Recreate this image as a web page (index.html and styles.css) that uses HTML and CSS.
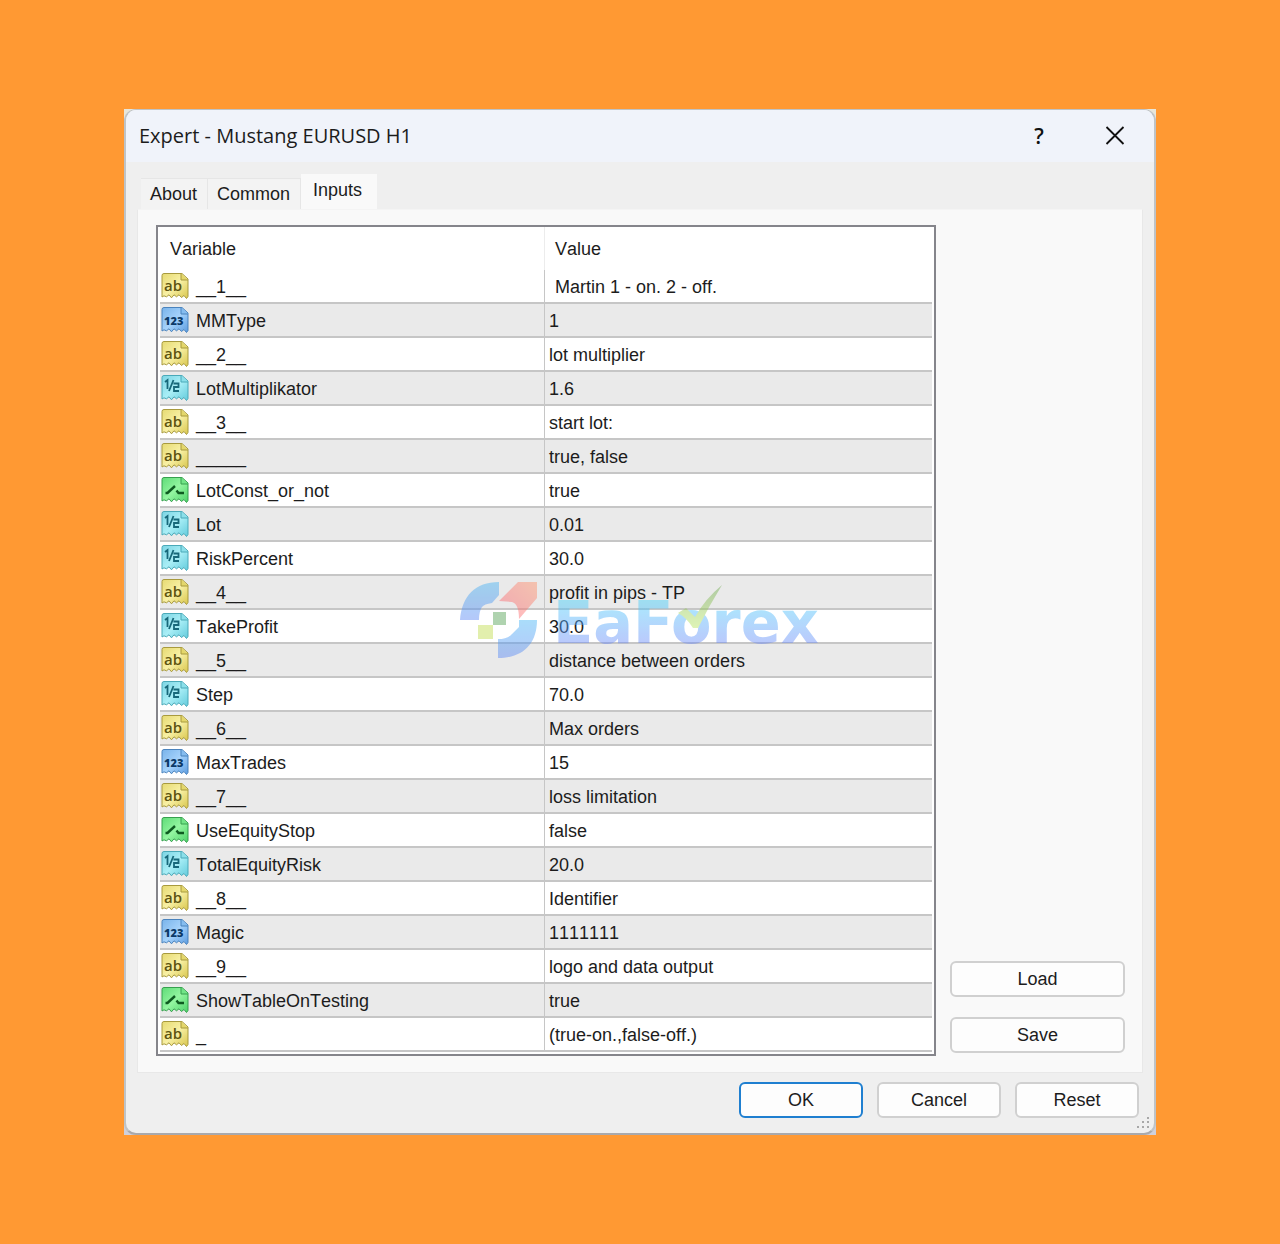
FILE: index.html
```html
<!DOCTYPE html>
<html lang="en">
<head>
<meta charset="utf-8">
<title>Expert - Mustang EURUSD H1</title>
<link rel="stylesheet" href="styles.css">
</head>
<body>
<svg class="defs" width="0" height="0" aria-hidden="true">
  <defs>
    <linearGradient id="gy" x1="0" y1="0" x2="1" y2="1"><stop offset="0" stop-color="#e6da72"/><stop offset=".5" stop-color="#f8f0a4"/><stop offset="1" stop-color="#d9c64c"/></linearGradient>
    <linearGradient id="gb" x1="0" y1="0" x2="1" y2="1"><stop offset="0" stop-color="#79b3ea"/><stop offset=".5" stop-color="#a5d2fb"/><stop offset="1" stop-color="#5b9be0"/></linearGradient>
    <linearGradient id="gc" x1="0" y1="0" x2="1" y2="1"><stop offset="0" stop-color="#7cd5e4"/><stop offset=".5" stop-color="#a9eef6"/><stop offset="1" stop-color="#62cbdc"/></linearGradient>
    <linearGradient id="gg" x1="0" y1="0" x2="1" y2="1"><stop offset="0" stop-color="#5fdc78"/><stop offset=".5" stop-color="#93f5a0"/><stop offset="1" stop-color="#4bd268"/></linearGradient>
    <path id="sheet" d="M3 1.5H21L27 7V24.5L25.5 26.5L23 23.5L20.5 25.5L18 22.8L15.5 24.8L13 22.8L10.5 25.8L8 22.8L5.5 24.8L3 23.8L1 25V3.5Q1 1.5 3 1.5Z"/>
    <path id="fold" d="M20 1.5V8H27"/>
    <symbol id="i-ab" viewBox="0 0 28 28"><use href="#sheet" fill="url(#gy)" stroke="#a89a3e"/><use href="#fold" fill="#e4d76a" stroke="#a89a3e"/><text x="3" y="19" class="glyph" font-size="15" fill="#5e5410">ab</text></symbol>
    <symbol id="i-int" viewBox="0 0 28 28"><use href="#sheet" fill="url(#gb)" stroke="#4a83bd"/><use href="#fold" fill="#85bdf0" stroke="#4a83bd"/><text x="3" y="19" class="glyph heavy" font-size="11" fill="#0c3a68">123</text></symbol>
    <symbol id="i-dbl" viewBox="0 0 28 28"><use href="#sheet" fill="url(#gc)" stroke="#4aa9b8"/><use href="#fold" fill="#8adfea" stroke="#4aa9b8"/><path d="M4 8L6.500 6V15M12.500 6L8 17M12.500 9.500H17.500V13H13V17H18" fill="none" stroke="#17687a" stroke-width="1.800"/></symbol>
    <symbol id="i-bool" viewBox="0 0 28 28"><use href="#sheet" fill="url(#gg)" stroke="#36a04e"/><use href="#fold" fill="#71e587" stroke="#36a04e"/><path d="M4.500 17H6.500L14 10M15.500 14.500L17.500 17H23" fill="none" stroke="#0e5a20" stroke-width="2.400"/></symbol>
  </defs>
</svg>

<main class="frame">
  <section class="dialog" aria-labelledby="dialog-title">
    <header class="titlebar">
      <h1 id="dialog-title">Expert - Mustang EURUSD H1</h1>
      <button class="sysbtn help" type="button" aria-label="Help">?</button>
      <button class="sysbtn" type="button" aria-label="Close"><svg width="20" height="20" viewBox="0 0 20 20"><path d="M1.500 1L18.500 18M18.500 1L1.500 18" stroke="#111" stroke-width="1.800" fill="none"/></svg></button>
    </header>

    <div class="tabs" role="tablist">
      <button class="tab" role="tab" type="button">About</button>
      <button class="tab" role="tab" type="button">Common</button>
      <button class="tab active" role="tab" type="button" aria-selected="true">Inputs</button>
    </div>

    <div class="panel">
      <div class="grid">
        <table>
          <thead><tr><th class="name">Variable</th><th>Value</th></tr></thead>
          <tbody>
            <tr><td><svg><use href="#i-ab"/></svg>__1__</td><td class="lead">Martin 1 - on. 2 - off.</td></tr>
            <tr><td><svg><use href="#i-int"/></svg>MMType</td><td>1</td></tr>
            <tr><td><svg><use href="#i-ab"/></svg>__2__</td><td>lot multiplier</td></tr>
            <tr><td><svg><use href="#i-dbl"/></svg>LotMultiplikator</td><td>1.6</td></tr>
            <tr><td><svg><use href="#i-ab"/></svg>__3__</td><td>start lot:</td></tr>
            <tr><td><svg><use href="#i-ab"/></svg>_____</td><td>true, false</td></tr>
            <tr><td><svg><use href="#i-bool"/></svg>LotConst_or_not</td><td>true</td></tr>
            <tr><td><svg><use href="#i-dbl"/></svg>Lot</td><td>0.01</td></tr>
            <tr><td><svg><use href="#i-dbl"/></svg>RiskPercent</td><td>30.0</td></tr>
            <tr><td><svg><use href="#i-ab"/></svg>__4__</td><td>profit in pips - TP</td></tr>
            <tr><td><svg><use href="#i-dbl"/></svg>TakeProfit</td><td>30.0</td></tr>
            <tr><td><svg><use href="#i-ab"/></svg>__5__</td><td>distance between orders</td></tr>
            <tr><td><svg><use href="#i-dbl"/></svg>Step</td><td>70.0</td></tr>
            <tr><td><svg><use href="#i-ab"/></svg>__6__</td><td>Max orders</td></tr>
            <tr><td><svg><use href="#i-int"/></svg>MaxTrades</td><td>15</td></tr>
            <tr><td><svg><use href="#i-ab"/></svg>__7__</td><td>loss limitation</td></tr>
            <tr><td><svg><use href="#i-bool"/></svg>UseEquityStop</td><td>false</td></tr>
            <tr><td><svg><use href="#i-dbl"/></svg>TotalEquityRisk</td><td>20.0</td></tr>
            <tr><td><svg><use href="#i-ab"/></svg>__8__</td><td>Identifier</td></tr>
            <tr><td><svg><use href="#i-int"/></svg>Magic</td><td>1111111</td></tr>
            <tr><td><svg><use href="#i-ab"/></svg>__9__</td><td>logo and data output</td></tr>
            <tr><td><svg><use href="#i-bool"/></svg>ShowTableOnTesting</td><td>true</td></tr>
            <tr><td><svg><use href="#i-ab"/></svg>_</td><td>(true-on.,false-off.)</td></tr>
          </tbody>
        </table>
      </div>
      <div class="side">
        <button class="btn" type="button">Load</button>
        <button class="btn" type="button">Save</button>
      </div>
    </div>

    <footer class="actions">
      <button class="btn primary" type="button">OK</button>
      <button class="btn" type="button">Cancel</button>
      <button class="btn" type="button">Reset</button>
    </footer>
    <svg class="grip" width="14" height="14" viewBox="0 0 14 14" aria-hidden="true"><path d="M10 1h2v2h-2zM10 5h2v2h-2zM10 10h2v2h-2zM5 5h2v2h-2zM5 10h2v2h-2zM0 10h2v2h-2z" fill="#a8a8a8"/></svg>
  </section>

  <svg class="watermark" width="370" height="84" viewBox="0 0 370 84" role="img" aria-label="EaForex">
    <defs>
      <linearGradient id="w1" x1="0" y1="0" x2="0" y2="1"><stop offset="0" stop-color="#44b4f4"/><stop offset="1" stop-color="#5a86f6"/></linearGradient>
      <linearGradient id="w2" x1="1" y1="0" x2="0" y2="1"><stop offset="0" stop-color="#ff9468"/><stop offset="1" stop-color="#fb5570"/></linearGradient>
      <linearGradient id="w3" gradientUnits="userSpaceOnUse" x1="0" y1="22" x2="0" y2="66"><stop offset="0" stop-color="#44d0fb"/><stop offset="1" stop-color="#6a86fa"/></linearGradient>
      <linearGradient id="w4" x1="0" y1="0" x2="0" y2="1"><stop offset="0" stop-color="#6ca850"/><stop offset="1" stop-color="#b6e65c"/></linearGradient>
    </defs>
    <g opacity=".45">
      <path d="M0 41C2 17 15 3 39 3V16L32 24Q24 25 22 28Q19 32 19 41Z" fill="url(#w1)"/>
      <path d="M39 22L58 3H77V19L59 40Q59 25 52 23Z" fill="url(#w2)"/>
      <path d="M59 41H77C77 66 62 79 38 79V60Q48 60 52 55L59 48Z" fill="url(#w1)"/>
      <path d="M33 33h13v13H33z" fill="#4f9f4f"/>
      <path d="M18 46h15v14H18z" fill="#c0dd4c"/>
      <text x="93" y="64" class="wordmark" fill="url(#w3)">EaForex</text>
      <path d="M218 34L226 29L235 38Q245 20 262 6Q249 27 238 49H233Q227 39 218 34Z" fill="url(#w4)"/>
    </g>
  </svg>
</main>
</body>
</html>
```
FILE: styles.css
```css
* { box-sizing: border-box; }

body {
  margin: 0;
  min-height: 100vh;
  padding: 109px 124px;
  background: #ff9933;
  color: #1c1c1c;
  font: 18px/24px "Liberation Sans", Arial, sans-serif;
  font-kerning: none;
}

.defs { position: absolute; }

.glyph { font-family: "Open Sans", sans-serif; font-weight: 600; }
.glyph.heavy { font-weight: 800; }

.frame {
  position: relative;
  background: linear-gradient(#e8e6da, #cfd0dc);
}

.dialog {
  position: relative;
  border: 2px solid #bfc3c6;
  border-top-width: 1px;
  border-bottom-color: #a9a9ac;
  border-radius: 12px;
  background: #efefef;
  overflow: hidden;
}

.titlebar {
  display: flex;
  align-items: center;
  height: 52px;
  padding: 0 20px 0 13px;
  background: #f0f3fa;
}

.titlebar h1 {
  flex: 1;
  margin: 0;
  font: 400 20px/24px "Open Sans", sans-serif;
}

.sysbtn {
  display: flex;
  align-items: center;
  justify-content: center;
  width: 38px;
  height: 36px;
  padding: 0;
  border: 0;
  background: none;
  color: #111;
}

.sysbtn.help {
  margin-right: 38px;
  font: 600 21px/24px "Open Sans", sans-serif;
}

.tabs {
  display: flex;
  align-items: flex-end;
  height: 47px;
  padding-left: 15px;
}

.tab {
  height: 31px;
  padding: 0 10px 0 9px;
  border: 1px solid #e6e6e6;
  border-width: 1px 1px 0 0;
  background: #f3f3f3;
  color: inherit;
  font: inherit;
  font-kerning: none;
}

.tab.active {
  height: 35px;
  padding: 0 14px 4px 12px;
  border-color: #f9f9f9;
  background: #f9f9f9;
}

.panel {
  display: flex;
  gap: 14px;
  margin: 0 11px;
  padding: 15px 17px 16px 18px;
  border: 1px solid #e8e8e8;
  border-top-color: #f4f4f4;
  background: #f9f9f9;
}

.grid {
  flex: 1;
  padding: 0 2px 2px;
  border: 2px solid #85858b;
  background: #fff;
}

table {
  width: 100%;
  border-collapse: separate;
  border-spacing: 0;
  table-layout: fixed;
}

th, td {
  padding: 2px 0 0 4px;
  font-weight: 400;
  text-align: left;
  white-space: nowrap;
}

th { height: 43px; padding: 0 0 0 10px; }

th.name { width: 385px; border-right: 1px solid #ececec; }

td { height: 34px; border-bottom: 2px solid #c6c6c6; }

td:first-child {
  padding: 0 0 0 1px;
  border-right: 1px solid #c6c6c6;
}

td.lead { padding-left: 10px; }

tbody tr:nth-child(even) { background: #eaeaea; }

td svg {
  width: 28px;
  height: 28px;
  margin-right: 7px;
  vertical-align: -7px;
}

.side {
  display: flex;
  flex-direction: column;
  justify-content: flex-end;
  gap: 20px;
  width: 175px;
  padding-bottom: 3px;
}

.btn {
  height: 36px;
  padding: 0;
  border: 2px solid #d0d0d0;
  border-radius: 6px;
  background: #fdfdfd;
  color: inherit;
  font: inherit;
}

.actions {
  display: flex;
  justify-content: flex-end;
  gap: 14px;
  padding: 9px 15px 15px;
}

.actions .btn { width: 124px; }

.actions .btn.primary { border-color: #1f7fd0; }

.grip {
  position: absolute;
  right: 3px;
  bottom: 3px;
}

.watermark {
  position: absolute;
  left: 336px;
  top: 470px;
  pointer-events: none;
}

.wordmark {
  font: 700 59px "DejaVu Sans", sans-serif;
}
```
